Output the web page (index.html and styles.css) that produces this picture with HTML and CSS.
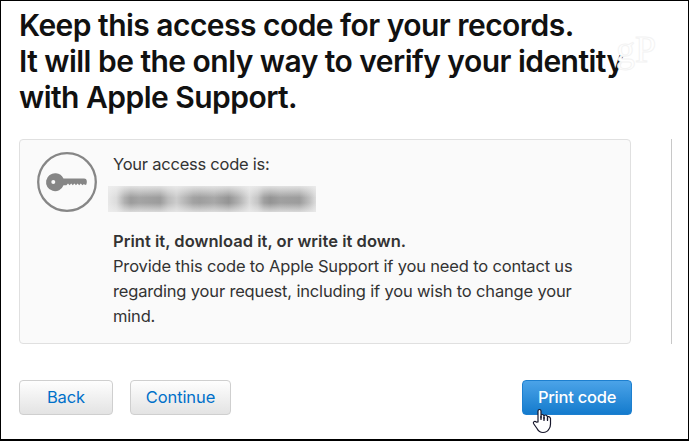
FILE: index.html
```
<!DOCTYPE html>
<html lang="en">
  <head>
    <meta charset="utf-8">
    <title>Access Code</title>
    <link rel="stylesheet" href="styles.css">
  </head>
  <body>
    <div class="content">
      <h1>Keep this access code for your records.<br>It will be the only way to verify your identity<br>with Apple Support.</h1>
      <div class="main">
        <div class="card">
          <svg class="key-icon" width="60" height="60" viewBox="0 0 60 60">
            <circle cx="30" cy="30" r="28.8" fill="none" stroke="#868686" stroke-width="2.3"/>
            <path fill="#868686" fill-rule="evenodd" d="M19 21.200a9 9 0 0 1 7.500 5.300H47q2.800 0 2.800 3v1q0 2.500-1.800 2.500l-1-1-1.600 1.200-1.600-1.700-1.600 1.700-1.600-1.700-1.600 1.700-1.600-1.700-1.600 1.700-1.600-1.700-1.600 1.700-1.600-1.700-1.600 1.700H26.500A9 9 0 1 1 19 21.200zM16.300 28a2 2 0 1 0 0 4a2 2 0 1 0 0-4z"/>
          </svg>
          <div class="details">
            <p class="label">Your access code is:</p>
            <div class="code"></div>
            <p><b>Print it, download it, or write it down.</b></p>
            <p>Provide this code to Apple Support if you need to contact us<br>regarding your request, including if you wish to change your<br>mind.</p>
          </div>
        </div>
        <div class="divider"></div>
      </div>
      <div class="buttons">
        <button class="back">Back</button>
        <button class="continue">Continue</button>
        <button class="print">Print code</button>
      </div>
    </div>
    <div class="watermark">gP</div>
    <svg class="cursor" width="20" height="26" viewBox="0 0 20 26">
      <path fill="#fff" stroke="#17172b" stroke-width="1.200" stroke-linejoin="round" d="M6 14V3q0-1.500 1.500-1.500T9 3v7V7.500q0-1 1.300-1T12 8v3V8q0-1 1.500-1T15.500 9v3V9.500q0-1 1.300-.8T18.500 10.500V16q0 3-1.500 5-2 3.500-6 3.500-4 0-6-4L1.500 15.500q-.5-1.500.8-2 1.200-.3 2.200.7z"/>
      <path fill="none" stroke="#17172b" stroke-width="1.200" d="M9 8v4M12 9v4M15.500 10v3"/>
    </svg>
  </body>
</html>
```

FILE: styles.css
```
* {
  box-sizing: border-box;
}
body {
  margin: 0;
  height: 441px;
  overflow: hidden;
  border: 1px solid #000;
  border-bottom-width: 2px;
  background: #fff;
  font-family: Inter, "Liberation Sans", sans-serif;
  font-size: 16.5px;
  color: #333;
}
.content {
  padding: 6px 16px 0 18px;
}
h1 {
  margin: 0;
  font-size: 30px;
  font-weight: 600;
  line-height: 36px;
  letter-spacing: -0.53px;
  color: #111;
  white-space: nowrap;
}
.main {
  display: flex;
  justify-content: space-between;
  height: 205px;
  margin-top: 24px;
}
.card {
  display: flex;
  width: 612px;
  padding: 12px 17px;
  border: 1px solid #e0e0e0;
  border-radius: 4px;
  background: #fafafa;
}
.key-icon {
  flex: none;
  margin-right: 16px;
}
.details {
  line-height: 25px;
  letter-spacing: -0.17px;
  white-space: nowrap;
}
p {
  margin: 0;
}
.label {
  letter-spacing: -0.24px;
}
b {
  font-weight: 600;
  letter-spacing: 0.04px;
}
/* blurred out access code */
.code {
  width: 208px;
  height: 26px;
  margin: 9px 0 17px -5px;
  background:
    linear-gradient(rgba(238, 238, 238, 0.85), rgba(238, 238, 238, 0) 45%, rgba(238, 238, 238, 0) 65%, rgba(238, 238, 238, 0.75)),
    linear-gradient(90deg, #e8e8e8 0%, #dcdcdc 4%, #b0b0b0 8%, #9c9c9c 11%, #a4a4a4 15%, #9c9c9c 25%, #bcbcbc 29%, #cccccc 33%, #bcbcbc 36%, #a2a2a2 41%, #9e9e9e 44%, #a8a8a8 51%, #949494 58%, #b2b2b2 63%, #dadada 68%, #c4c4c4 72%, #a0a0a0 75%, #949494 78%, #a0a0a0 83%, #9c9c9c 92%, #c0c0c0 97%, #dddddd 100%);
}
.divider {
  width: 1px;
  background: #c8c8c8;
}
.buttons {
  display: flex;
  width: 613px;
  margin-top: 36px;
}
button {
  height: 35px;
  padding: 0 0 2px;
  border: 1px solid #cfcfcf;
  border-radius: 4px;
  background: linear-gradient(#fefefe, #e3e3e3);
  font-family: inherit;
  font-size: 16.5px;
  letter-spacing: -0.1px;
  color: #0070c9;
}
.back {
  width: 94px;
  margin-right: 17px;
}
.continue {
  width: 101px;
}
.print {
  width: 110px;
  margin-left: auto;
  border-color: #1d7fcf;
  background: linear-gradient(#4ba3e8, #147bcd);
  font-weight: 500;
  letter-spacing: -0.25px;
  color: #fff;
}
.watermark {
  position: absolute;
  left: 616px;
  top: 27px;
  font-family: "Liberation Serif", serif;
  font-size: 38px;
  line-height: 44px;
  color: #fff;
  -webkit-text-stroke: 1px #f3f3f3;
}
.cursor {
  position: absolute;
  left: 532px;
  top: 408px;
}
```
